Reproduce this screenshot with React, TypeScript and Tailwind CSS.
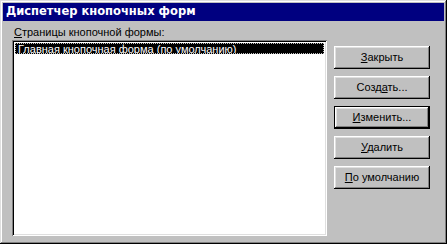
import React from "react";

const font = { fontFamily: '"Liberation Sans", Arial, sans-serif' };

function Btn({ pre, u, post, def }: { pre?: string; u: string; post?: string; def?: boolean }) {
  const inner = (
    <div className="w-full h-full flex items-center justify-center bg-[#c0c0c0] text-[11px] text-black shadow-[inset_-1px_-1px_0_#000,inset_1px_1px_0_#fff,inset_-2px_-2px_0_#808080,inset_2px_2px_0_#dfdfdf]">
      <span>
        {pre}
        <span className="underline underline-offset-1">{u}</span>
        {post}
      </span>
    </div>
  );
  if (def) {
    return <div className="w-[96px] h-[23px] border border-black">{inner}</div>;
  }
  return <div className="w-[96px] h-[23px]">{inner}</div>;
}

export default function App() {
  return (
    <div
      style={font}
      className="w-[447px] h-[244px] bg-[#c0c0c0] p-[3px] flex flex-col shadow-[inset_-1px_-1px_0_#000,inset_1px_1px_0_#dfdfdf,inset_-2px_-2px_0_#808080,inset_2px_2px_0_#fff]"
    >
      <div className="h-[18px] bg-[#000080] text-white font-bold text-[11.5px] flex items-center pl-[3px]" style={{ fontFamily: '"DejaVu Sans", Verdana, sans-serif' }}>
        Диспетчер кнопочных форм
      </div>
      <div className="flex flex-1 pl-[9px] pt-[5px] gap-[7px]">
        <div className="flex flex-col">
          <div className="h-[14px] text-[11px] leading-[13px] pl-[2px] text-black">
            <span className="underline underline-offset-1">С</span>траницы кнопочной формы:
          </div>
          <div className="w-[315px] h-[196px] bg-white p-[2px] shadow-[inset_1px_1px_0_#808080,inset_-1px_-1px_0_#fff,inset_2px_2px_0_#000,inset_-2px_-2px_0_#dfdfdf]">
            <div className="mx-[1px] mt-[1px] h-[11px] bg-black text-white text-[11px] leading-[10px] pl-[2px] border border-dotted border-[#c0c0c0] whitespace-nowrap overflow-hidden">
              Главная кнопочная форма (по умолчанию)
            </div>
          </div>
        </div>
        <div className="flex flex-col mt-[20px] gap-[7px]">
          <Btn u="З" post="акрыть" />
          <Btn pre="Созд" u="а" post="ть..." />
          <Btn u="И" post="зменить..." def />
          <Btn u="У" post="далить" />
          <Btn u="П" post="о умолчанию" />
        </div>
      </div>
    </div>
  );
}
